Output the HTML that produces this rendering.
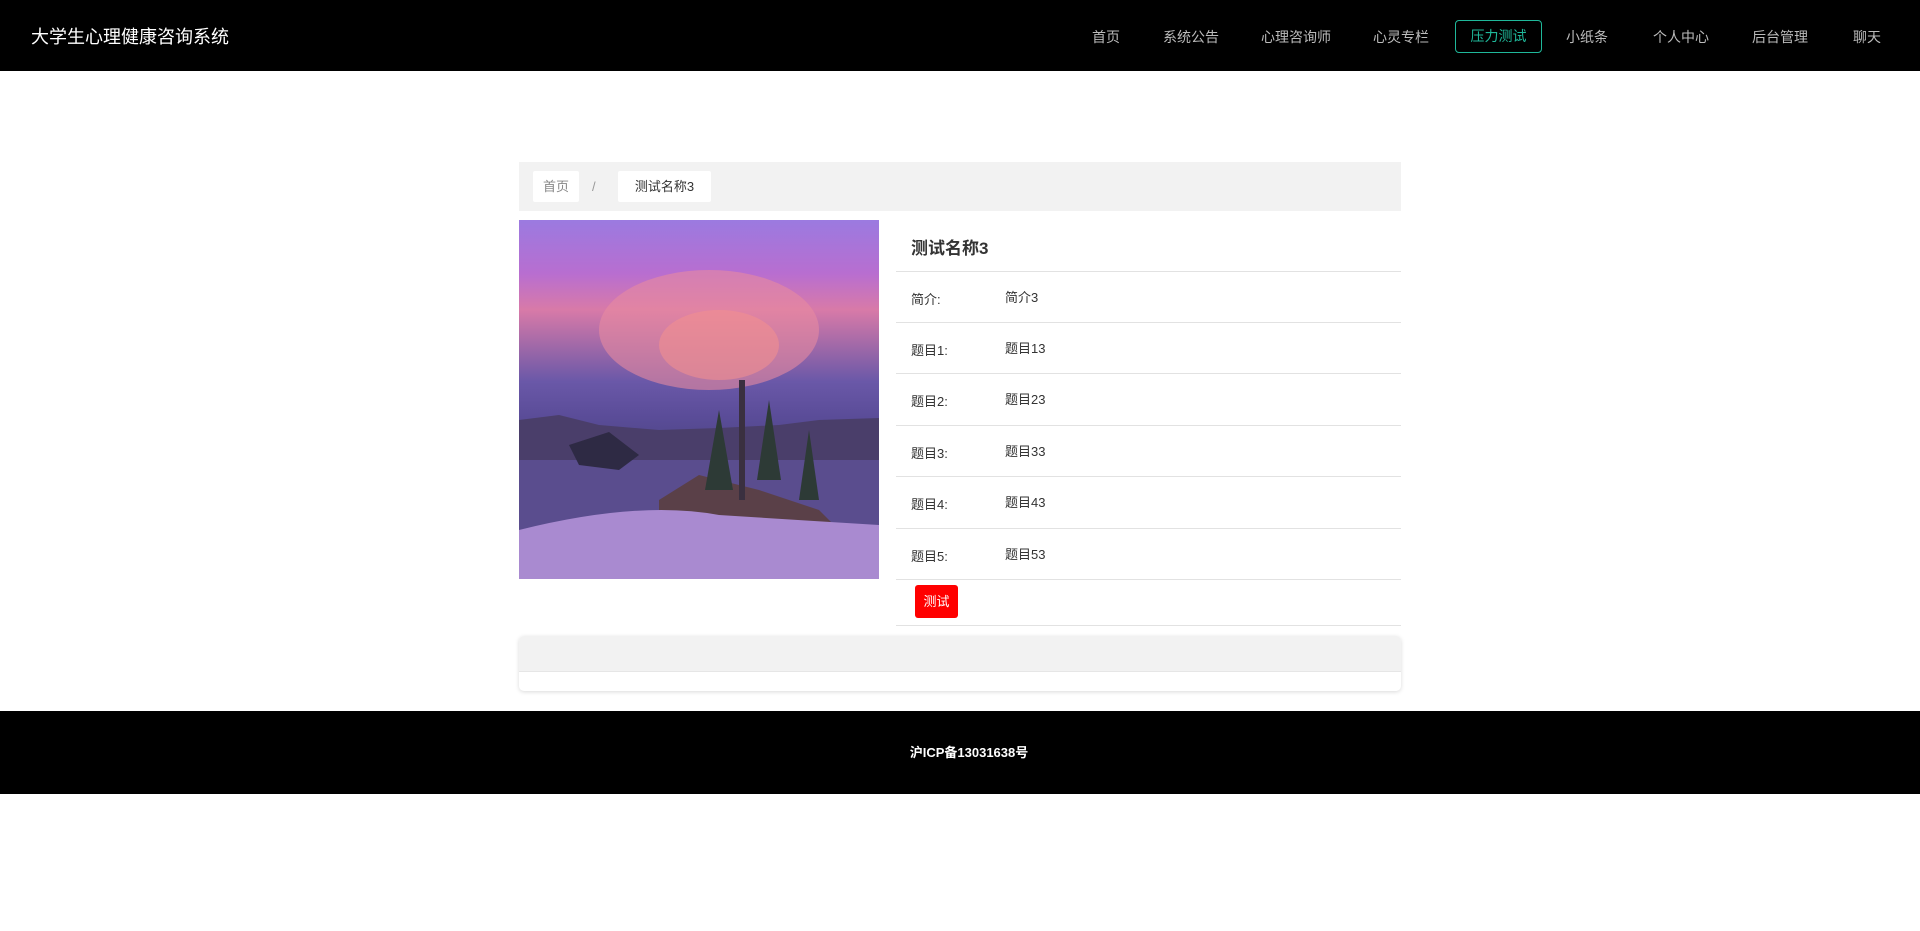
<!DOCTYPE html>
<html><head><meta charset="utf-8"><style>
*{margin:0;padding:0;box-sizing:border-box}
body{width:1920px;height:931px;background:#fff;font-family:"Liberation Sans","Noto Sans CJK SC",sans-serif;position:relative;overflow:hidden}
.hdr{position:absolute;left:0;top:0;width:1920px;height:71px;background:#000}
.title{position:absolute;left:31px;top:23px;color:#fff;font-size:18px}
.nav{position:absolute;top:27px;color:#bbb;font-size:14px;transform:translateX(-50%);white-space:nowrap}
.act{position:absolute;left:1455px;top:20px;width:87px;height:33px;border:1px solid #1fb89a;border-radius:4px;color:#1fb89a;font-size:14px;text-align:center;line-height:31px}
.bc{position:absolute;left:519px;top:162px;width:882px;height:49px;background:#f2f2f2}
.bi{position:absolute;top:9px;height:31px;background:#fff;border-radius:2px;font-size:13px;line-height:31px;text-align:center}
.img{position:absolute;left:519px;top:220px;width:360px;height:359px;background:linear-gradient(180deg,#9b7ae0 0%,#b86ed0 15%,#d87aa8 25%,#6a58a8 45%,#5a4c98 55%,#4d4684 65%,#3e3a6e 75%,#5a4a7a 83%,#b08ad0 88%,#a788cc 100%);overflow:hidden}
.line{position:absolute;left:896px;width:505px;height:1px;background:#e2e2e2}
.t{position:absolute;font-size:13px;color:#333}
.btn{position:absolute;left:915px;top:585px;width:43px;height:33px;background:#f00;color:#fff;border-radius:3px;font-size:13px;line-height:33px;text-align:center}
.box{position:absolute;left:519px;top:636px;width:882px;height:55px;border-radius:5px;box-shadow:0 1px 4px rgba(0,0,0,.15);overflow:hidden;background:#fff}
.box div{height:36px;background:#f2f2f2;border-bottom:1px solid #e6e6e6}
.ftr{position:absolute;left:0;top:711px;width:1920px;height:83px;background:#000;color:#fff;font-size:13px;font-weight:bold;text-align:center;line-height:83px;padding-left:18px}
</style></head><body>
<div class="hdr">
<div class="title">大学生心理健康咨询系统</div>
<div class="nav" style="left:1106px">首页</div>
<div class="nav" style="left:1191px">系统公告</div>
<div class="nav" style="left:1296px">心理咨询师</div>
<div class="nav" style="left:1401px">心灵专栏</div>
<div class="act">压力测试</div>
<div class="nav" style="left:1587px">小纸条</div>
<div class="nav" style="left:1681px">个人中心</div>
<div class="nav" style="left:1780px">后台管理</div>
<div class="nav" style="left:1867px">聊天</div>
</div>
<div class="bc">
<div class="bi" style="left:14px;width:46px;color:#888">首页</div>
<div style="position:absolute;left:73px;top:9px;line-height:31px;color:#999;font-size:13px">/</div>
<div class="bi" style="left:99px;width:93px;color:#333">测试名称3</div>
</div>
<div class="img">
<svg width="360" height="359" style="position:absolute;left:0;top:0">
<ellipse cx="190" cy="110" rx="110" ry="60" fill="#e88aa0" opacity=".6"/>
<ellipse cx="200" cy="125" rx="60" ry="35" fill="#f29090" opacity=".6"/>
<path d="M0 200 L40 195 L80 205 L140 210 L200 208 L260 205 L300 200 L360 198 L360 240 L0 240Z" fill="#4a3e6a"/>
<path d="M0 240 L360 240 L360 305 L0 310Z" fill="#5a4d8e"/>
<path d="M50 225 L90 212 L120 235 L100 250 L60 245Z" fill="#2e2a44"/>
<path d="M140 280 L180 255 L240 270 L300 290 L320 310 L140 310Z" fill="#5a4048"/>
<path d="M0 310 Q120 280 200 295 Q280 300 360 305 L360 359 L0 359Z" fill="#a98ad0"/>
<rect x="220" y="160" width="6" height="120" fill="#3a3040"/>
<path d="M250 180 L262 260 L238 260Z" fill="#2d3a36"/>
<path d="M200 190 L214 270 L186 270Z" fill="#2d3a36"/>
<path d="M290 210 L300 280 L280 280Z" fill="#2d3a36"/>
</svg>
</div>
<div class="t" style="left:911px;top:234px;font-size:17px;font-weight:bold;color:#333">测试名称3</div>
<div class="line" style="top:271px"></div>
<div class="t" style="left:911px;top:289px">简介:</div><div class="t" style="left:1005px;top:287px">简介3</div>
<div class="line" style="top:322px"></div>
<div class="t" style="left:911px;top:340px">题目1:</div><div class="t" style="left:1005px;top:338px">题目13</div>
<div class="line" style="top:373px"></div>
<div class="t" style="left:911px;top:391px">题目2:</div><div class="t" style="left:1005px;top:389px">题目23</div>
<div class="line" style="top:425px"></div>
<div class="t" style="left:911px;top:443px">题目3:</div><div class="t" style="left:1005px;top:441px">题目33</div>
<div class="line" style="top:476px"></div>
<div class="t" style="left:911px;top:494px">题目4:</div><div class="t" style="left:1005px;top:492px">题目43</div>
<div class="line" style="top:528px"></div>
<div class="t" style="left:911px;top:546px">题目5:</div><div class="t" style="left:1005px;top:544px">题目53</div>
<div class="line" style="top:579px"></div>
<div class="btn">测试</div>
<div class="line" style="top:625px"></div>
<div class="box"><div></div></div>
<div class="ftr">沪ICP备13031638号</div>
</body></html>
